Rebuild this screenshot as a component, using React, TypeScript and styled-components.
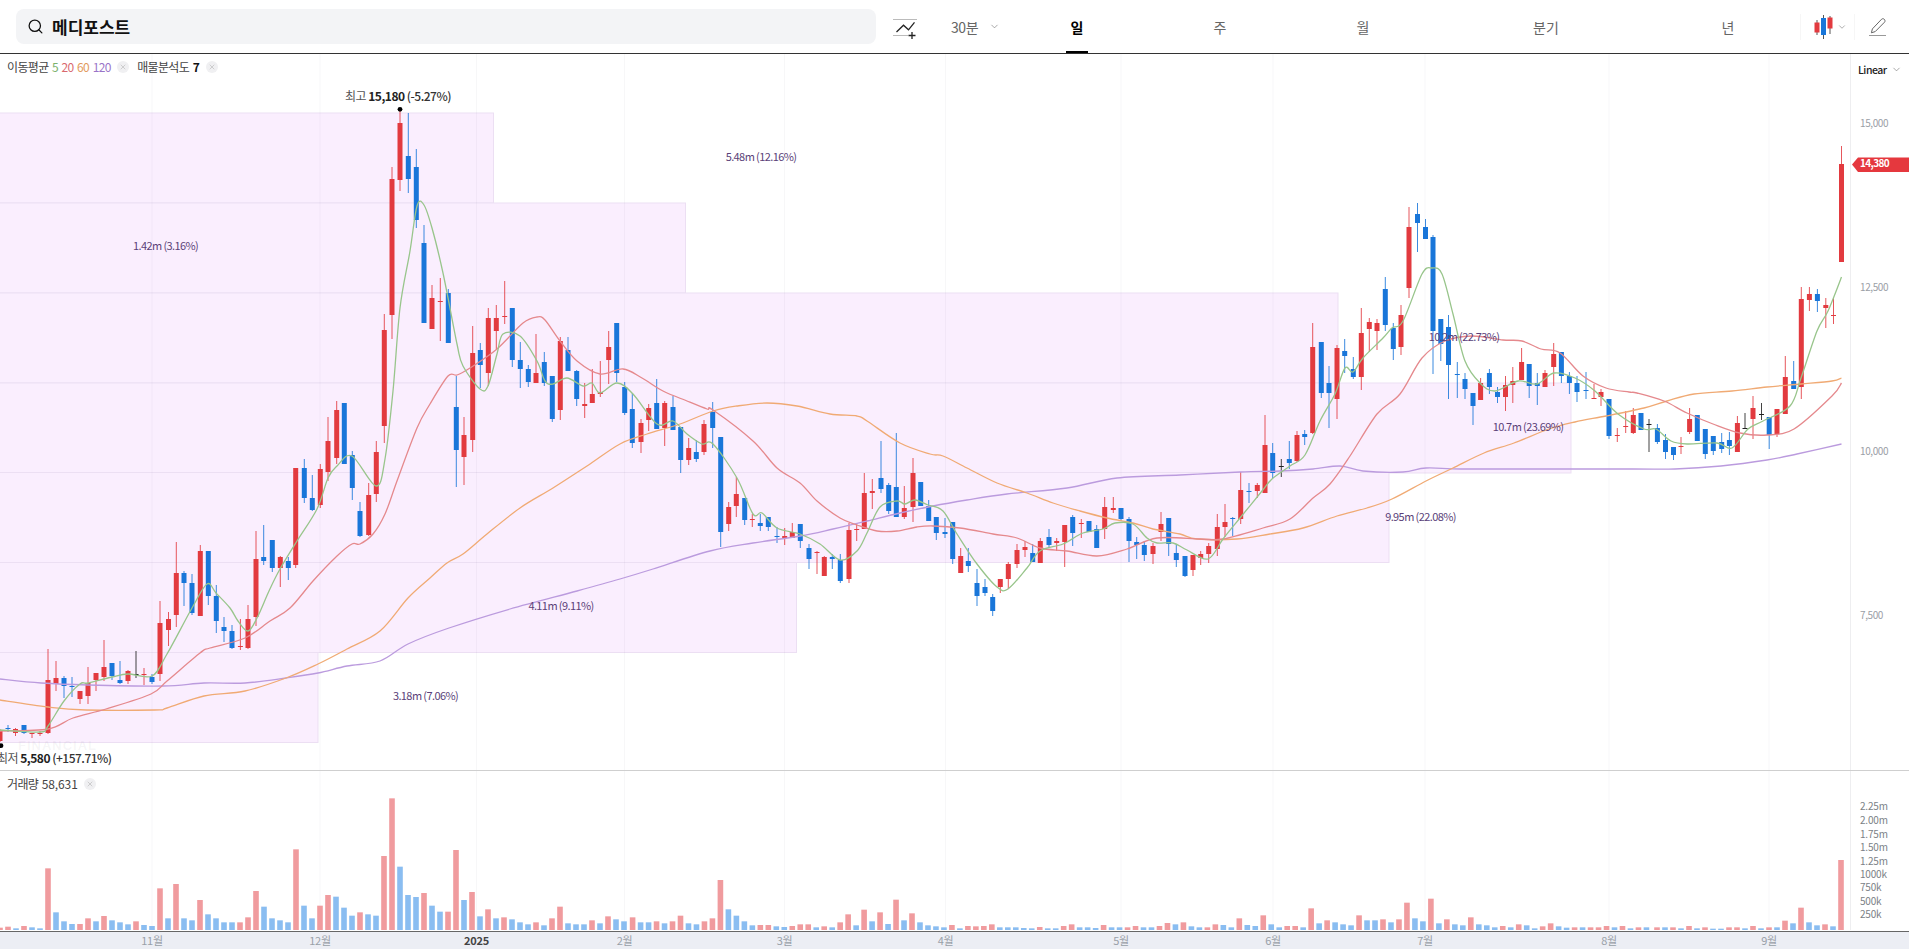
import React from 'react';
import styled, { createGlobalStyle } from 'styled-components';
import { Search, ChevronDown, X } from 'lucide-react';

const FONT = '"Noto Sans CJK KR", "Noto Sans", sans-serif';
const RED = '#e23a3f';
const BLUE = '#1976d9';

const Global = createGlobalStyle`
  html, body { margin: 0; padding: 0; background: #fff; overflow: hidden; }
  body { font-family: ${FONT}; }
`;

const CANDLES = `
0 728 730 740 741 r
8 724 727 728 731 b
15.5 727 728 732 735 r
24 724 724 732 733 b
32 732 732 733 737 r
40 730 732 733 735 r
48 648 679 732 733 r
56 660 677 683 690 r
64 675 677 685 697 b
72 676 685 686 696 b
80 690 690 698 703 r
88 666 682 695 703 r
96 672 672 679 690 r
104 639 666 676 680 r
112 662 662 675 679 b
120 660 679 682 683 b
128 669 670 680 683 r
136 650 673 674 677 k
144 667 673 674 684 r
152 673 676 681 683 b
160 600 622 673 680 r
168.5 611 618 629 645 r
176.3 541 572 614 626 r
184 570 572 582 605 b
192 573 582 612 614 b
200.3 544 550 615 615 r
208.3 550 550 595 604 b
216.3 584 595 620 632 b
224 616 626 630 641 b
232 624 630 647 648 b
240.4 618 645 646 649 r
248 604 618 647 648 r
256 530 558 616 625 r
263.7 524 556 560 564 b
272.3 539 539 567 571 b
280.3 555 556 567 586 r
288.3 556 560 567 579 b
295.7 467 467 564 567 r
304.3 458 467 497 502 b
312.3 474 497 509 510 b
320.3 463 468 504 507 r
328 416 440 471 480 r
336.7 400 409 457 463 r
344.3 402 402 463 463 b
352.3 450 454 487 499 b
360 501 510 535 536 b
368.7 482 494 534 535 r
376.3 440 451 493 501 r
384.3 313 329 425 442 r
392 166 178 314 338 r
400 110 122 179 190 r
408.3 112 155 178 192 b
416.3 148 166 219 227 b
424 224 242 322 322 b
432 284 297 328 328 r
440.3 277 300 301 340 r
448.3 288 292 342 342 b
456.3 375 406 449 486 b
464 416 434 456 484 r
472.7 325 352 439 451 r
480.3 342 349 364 387 b
488.3 307 317 372 385 r
496.3 304 317 330 348 r
504.7 280 315 316 323 r
512.3 307 307 359 366 b
520.3 341 359 368 387 b
528.3 364 368 381 386 b
536 333 372 382 382 r
544.3 351 361 382 385 b
552.3 375 375 418 421 b
560.3 336 340 409 419 r
568 336 349 370 370 b
576.7 369 370 398 405 b
584.7 382 403 405 417 r
592.3 368 393 402 402 r
600.3 360 391 393 396 r
608.7 330 346 359 383 r
616.7 322 322 372 381 b
624.7 381 386 412 414 b
632.3 392 408 442 447 b
641 418 422 441 452 r
648.7 403 407 419 430 r
656.7 378 402 428 428 b
664.7 400 402 427 445 r
673 395 406 429 429 b
680.7 426 426 459 472 b
688.7 437 447 459 464 r
696.3 439 451 458 461 b
704 419 423 451 454 r
712.7 401 411 427 447 b
720.7 436 436 531 546 b
728.7 501 506 523 530 r
736.3 476 493 505 516 r
744.7 497 497 519 524 b
752.3 513 518 519 526 r
760.3 513 522 525 530 b
768.3 516 516 526 530 b
777 526 535 536 542 b
784.7 527 535 537 544 r
792.3 522 531 537 537 r
800.3 523 523 540 547 b
809 543 547 558 568 b
817 550 551 552 573 r
824.3 555 556 575 575 r
832.3 553 556 558 568 b
840.3 553 559 580 582 b
849 522 529 578 582 r
856.7 523 528 529 540 r
864.3 472 492 528 528 r
872.3 478 490 492 508 r
881 440 477 488 492 b
888.7 482 484 510 513 b
896.3 432 486 516 516 b
904.3 485 507 516 518 r
913 457 472 506 521 r
920.7 481 481 505 505 b
928.7 499 505 520 520 b
936.3 516 516 532 539 b
945 517 531 533 537 b
952.7 521 521 558 563 b
960.7 547 555 572 572 r
968.3 547 560 565 571 b
977 568 582 595 605 b
985 578 586 592 595 b
992.7 593 596 610 615 b
1000.3 578 578 586 592 r
1008.3 561 563 578 588 r
1017 543 549 563 567 r
1025 540 546 549 556 r
1032.7 543 552 561 561 b
1040.3 537 540 562 562 r
1049 528 536 544 546 b
1056.7 537 540 542 550 r
1064.7 524 524 541 566 r
1072.7 514 516 532 545 b
1081.3 518 522 523 537 r
1089 520 520 531 531 b
1096.7 524 528 547 547 b
1104.7 496 506 528 538 r
1113.3 496 507 509 512 r
1121 507 507 518 520 b
1129 516 518 540 561 b
1136.7 536 541 544 558 b
1144.3 540 544 554 560 b
1153 542 545 553 563 r
1161 511 523 531 540 r
1168.7 517 517 543 555 b
1176.3 543 552 559 566 b
1185 555 555 575 576 b
1193 554 554 569 575 r
1200.7 550 553 557 564 r
1208.7 542 545 553 562 r
1217.3 513 526 548 555 r
1225 503 521 526 536 r
1232.7 516 517 518 535 b
1240.7 471 489 518 523 r
1249 482 490 491 502 b
1257.3 482 484 490 497 r
1265 414 444 492 492 r
1272.7 442 452 472 477 b
1281.3 458 465 466 476 k
1289.3 440 458 462 468 b
1297 430 434 460 461 r
1304.7 429 433 436 444 b
1312.7 322 346 432 433 r
1321.3 341 341 392 397 b
1329 365 382 392 427 b
1337 344 347 398 418 r
1344.7 338 350 355 372 b
1353.3 356 368 376 378 b
1361.3 307 332 376 389 r
1369.3 317 321 328 351 r
1377 318 322 330 349 r
1385.3 276 288 324 330 b
1393.3 322 327 348 359 b
1401 304 314 346 354 r
1409 206 226 287 297 r
1417.5 202 213 222 251 b
1425.5 218 226 238 238 b
1433 234 236 330 373 b
1440.8 318 318 343 360 b
1448.5 314 326 364 398 b
1457.3 361 373 374 397 b
1465 372 378 388 398 b
1473 392 392 405 424 b
1480.6 377 382 399 399 r
1489.4 368 372 386 393 b
1497.5 386 391 396 402 b
1505.5 375 384 396 410 r
1512.8 366 380 384 402 r
1521.6 347 361 379 379 r
1529.2 363 363 385 397 b
1537.3 372 382 385 404 b
1545 369 372 386 386 r
1553.7 342 353 366 385 r
1561.4 351 351 375 382 b
1569.4 371 375 382 393 b
1577 375 382 391 401 b
1586 371 389 390 398 b
1594 383 397 398 398 r
1601 388 391 396 405 r
1609 398 398 435 438 b
1617.3 427 434 435 441 r
1625.7 410 425 426 432 r
1633.3 407 414 432 433 r
1641 412 412 429 429 b
1649 418 423 424 451 k
1657.4 423 427 441 443 b
1665.5 433 439 451 458 b
1673.5 446 446 454 459 b
1681 436 445 446 453 r
1689.6 407 418 431 433 r
1697.3 414 414 440 440 b
1705.3 428 428 453 458 b
1713.3 435 435 450 454 b
1721.7 432 441 448 452 b
1729.4 431 439 445 454 b
1737.4 415 422 451 451 r
1745 412 427 428 428 k
1753 395 407 418 438 r
1761.5 402 413 414 419 k
1769.2 416 416 434 448 b
1777 408 408 433 436 r
1785.3 355 376 413 413 r
1793.7 360 380 388 388 b
1801.3 286 298 386 398 r
1809.4 286 293 299 310 r
1817.4 288 293 300 311 b
1825.8 297 304 307 327 r
1833.5 297 314 315 323 r
1841.5 145 163 261 261 r
`
  .trim()
  .split('\n')
  .map((line) => {
    const [x, wt, bt, bb, wb, c] = line.split(' ');
    return { x: +x, wt: +wt, bt: +bt, bb: +bb, wb: +wb, c };
  });

const parseVolume = (data: string, start: number, step: number, base: number) =>
  data
    .trim()
    .split(/\s+/)
    .map((token, i) => ({
      x: start + i * step,
      h: (base - Number(token.slice(1))) / 3,
      c: token[0],
    }));

const VOLUMES = [
  ...parseVolume(
    `r503 r500 b505 r498 b502 b505 r325 b457 b484 b492 r492 r475 b484 r468 b481 b487 b493 r484 b495 b498
     r385 b475 r372 b475 b481 r420 b463 b475 b487 b487 r487 r472 r393 b440 b475 b481 b487 r268 b437 b475
     r437 r405 b410 b443 b467 r457 b463 b467 r288 r115 b320 b405 b411 r399 b437 b455 r455 r270 b420 r396
     b469 r448 b475 r472 b478 b487 b493 r487 b496 r475 r440 b490 b493 b493 r481 b490 r469 b478 b484`,
    0,
    8,
    510,
  ),
  ...parseVolume(
    `r202 b217 b217 r214 b220 r214 r197 b220 b223 r214 r205 r90 b178 b197 b214 b226 r225 r225 b229 b231
     r228 r223 r223 b232 r229 b232 r217 r193 b226 r179 b214 r187 b222 r149 b211 r190 b217 b226 b229 b232
     r225 b235 r228 r229 r228 r223 b232 b232 b232 b234 b235 r231 b235 b235 r228 r223 b232 b232 b234 r225
     b232 b232 r232 r228 b232 b232 r228 r219 b223 r217 b229 b232 r232 r223 b225 b232 r205 b225 b228 r196
     b223 b232 r228 r228 b232 r175 b220 r211 b217 b223 b226 r196 b211 b211 r208 b217 r208 r158 b205 b214
     r146 b220 r208 b223 b226 r202 b223 b226 b232 r228 b232 r223 b226 b235 r229 r220 b229 b233 r232 b232
     r232 r232 r228 b232 r228 b235 r232 b232`,
    632.6,
    7.983,
    240,
  ),
  ...parseVolume(
    `r502 b502 r502 b505 r498 b505 r502 b506 b506 r502 r502 b505 r498 b505 r502 b502 r482 b490 r443 b487 b496 r493 b499 r300`,
    1657,
    8,
    510,
  ),
];

const ROWS = [
  { y: 112, right: 493.5 },
  { y: 202, right: 685.5 },
  { y: 292, right: 1338 },
  { y: 382, right: 1571 },
  { y: 471.5, right: 1389 },
  { y: 561.5, right: 796.5 },
  { y: 651.5, right: 318 },
];

const PROFILE_LABELS = [
  { x: 761, y: 157, text: '5.48m (12.16%)' },
  { x: 165.6, y: 246.5, text: '1.42m (3.16%)' },
  { x: 1464, y: 337, text: '10.2m (22.73%)' },
  { x: 1528, y: 427, text: '10.7m (23.69%)' },
  { x: 1420.5, y: 517, text: '9.95m (22.08%)' },
  { x: 561, y: 606, text: '4.11m (9.11%)' },
  { x: 425.5, y: 696, text: '3.18m (7.06%)' },
];

const MONTHS = [
  { x: 152, label: '11월' },
  { x: 320, label: '12월' },
  { x: 476.5, label: '2025', strong: true },
  { x: 624.5, label: '2월' },
  { x: 784.5, label: '3월' },
  { x: 945.5, label: '4월' },
  { x: 1121, label: '5월' },
  { x: 1273, label: '6월' },
  { x: 1425, label: '7월' },
  { x: 1609, label: '8월' },
  { x: 1769, label: '9월' },
];

const PRICE_TICKS = [
  { y: 123, label: '15,000' },
  { y: 287, label: '12,500' },
  { y: 451, label: '10,000' },
  { y: 615, label: '7,500' },
];

const VOLUME_TICKS = [
  { y: 807.7, label: '2.25m' },
  { y: 821.2, label: '2.00m' },
  { y: 835, label: '1.75m' },
  { y: 848.7, label: '1.50m' },
  { y: 862, label: '1.25m' },
  { y: 875, label: '1000k' },
  { y: 888.6, label: '750k' },
  { y: 902, label: '500k' },
  { y: 915.7, label: '250k' },
];

const smooth = (raw: string) => {
  const p = raw.split(' ').map((pair) => pair.split(',').map(Number));
  let d = `M${p[0][0]} ${p[0][1]}`;
  for (let i = 0; i < p.length - 1; i++) {
    const a = p[Math.max(i - 1, 0)];
    const b = p[i];
    const c = p[i + 1];
    const e = p[Math.min(i + 2, p.length - 1)];
    const c1x = b[0] + (c[0] - a[0]) / 6;
    const c1y = b[1] + (c[1] - a[1]) / 6;
    const c2x = c[0] - (e[0] - b[0]) / 6;
    const c2y = c[1] - (e[1] - b[1]) / 6;
    d += `C${c1x.toFixed(1)} ${c1y.toFixed(1)} ${c2x.toFixed(1)} ${c2y.toFixed(1)} ${c[0]} ${c[1]}`;
  }
  return d;
};

const MOVING_AVERAGES = [
  {
    color: '#bb9bde',
    points:
      '0,678 41,682 88,684 163,685 204,682 245,682 286,677 318,672 347,665 380,660 408,643 449,627 510,608 577,590 620,578 653,568 710,550 753,542 800,535 833,528 867,520 900,512 933,505 967,499 1007,493 1067,487 1117,477 1180,474 1240,471 1280,470 1313,468 1340,465 1363,470 1403,471 1426,467 1461,468 1530,468 1633,468 1675,468 1721,465 1767,459 1797,453 1841.5,443',
  },
  {
    color: '#f0aa74',
    points:
      '0,699 48,706 86,709 155,709 167,707 204,695 245,690 286,677 318,663 347,648 380,630 408,597 430,577 447,562 463,553 487,533 520,507 553,487 587,465 620,443 647,433 680,423 713,410 737,405 767,402 797,405 830,413 857,415 867,420 900,442 930,453 943,455 967,467 997,482 1027,492 1053,502 1080,510 1107,517 1133,522 1153,528 1180,533 1197,538 1237,538 1270,533 1303,527 1337,515 1367,507 1392,498 1426,480 1453,467 1484,452 1514,442 1549,428 1575,421 1606,415 1644,407 1667,400 1694,393 1732,390 1767,386 1801,383 1832,380 1841.5,377',
  },
  {
    color: '#e5898d',
    points:
      '0,730 48,728 73,717 106,708 151,693 167,680 200,652 210,647 245,637 270,620 290,607 313,580 337,555 352,543 360,543 373,533 385,513 397,480 417,427 430,403 448,375 457,374 470,367 497,348 523,322 537,316 545,319 560,340 577,360 600,373 623,368 642,377 663,390 687,400 707,408 713,409 753,440 777,467 800,482 817,500 840,517 857,524 877,530 897,530 917,526 933,525 960,527 993,533 1017,537 1040,547 1067,550 1097,555 1127,548 1157,537 1200,538 1223,538 1263,527 1290,518 1313,497 1330,483 1350,455 1377,413 1400,393 1422,357 1445,340 1472,335 1503,339 1522,340 1541,348 1560,352 1583,375 1606,387 1629,391 1637,392 1664,400 1687,412 1713,423 1740,432 1767,434 1794,428 1832,395 1841.5,382',
  },
  {
    color: '#98c58b',
    points:
      '0,729 40,731 48,725 64,700 80,683 88,682 112,676 128,673 152,675 167,653 192,607 207,583 216,592 230,607 238,620 248,630 257,617 269,590 280,568 297,540 317,508 328,477 337,465 352,455 376,485 385,458 393,390 400,307 410,250 417,205 424,204 432,227 443,272 457,343 463,365 480,388 488,385 497,353 503,333 520,335 537,360 545,380 553,383 567,377 583,385 592,382 600,392 617,382 633,393 657,423 673,420 687,433 702,443 713,443 737,477 753,513 762,512 777,527 800,533 820,543 840,559 857,550 867,532 880,506 897,500 905,503 915,499 928,504 943,510 957,533 977,563 997,586 1008,588 1027,567 1040,550 1063,543 1083,532 1103,528 1115,522 1133,523 1147,537 1157,542 1173,542 1187,549 1208,558 1223,538 1240,517 1262,490 1272,478 1290,465 1305,454 1320,420 1335,393 1345,367 1353,371 1363,357 1383,337 1392,327 1403,320 1422,273 1432,267 1442,273 1453,313 1465,360 1480,382 1495,390 1518,380 1537,383 1554,372 1575,377 1595,390 1618,413 1644,428 1656,428 1671,440 1687,443 1717,442 1732,447 1748,428 1763,420 1790,405 1801,377 1817,330 1828,310 1841.5,276',
  },
].map((m) => ({ color: m.color, d: smooth(m.points) }));

const candleColor = (c: string) => (c === 'r' ? RED : c === 'b' ? BLUE : '#222');

/* page frame */
const Page = styled.div`
  width: 1909px;
  height: 949px;
  display: flex;
  flex-direction: column;
  overflow: hidden;
  background: #fff;
  font-family: ${FONT};
`;

/* header */
const Header = styled.header`
  flex: none;
  height: 53px;
  display: flex;
  align-items: center;
  padding-left: 16px;
  border-bottom: 1px solid #333;
`;
const SearchBox = styled.div`
  width: 860px;
  height: 35px;
  margin-right: 17px;
  padding-left: 11px;
  display: flex;
  align-items: center;
  gap: 8px;
  box-sizing: border-box;
  background: #f3f4f6;
  border-radius: 8px;
  color: #111;
`;
const SearchTitle = styled.span`
  font-size: 17px;
  font-weight: 700;
  color: #111;
`;
const DrawToolIcon = styled.svg`
  flex: none;
  width: 25px;
  height: 24px;
  margin-right: 33px;
`;
const IntervalButton = styled.div`
  flex: none;
  width: 54.5px;
  display: flex;
  align-items: center;
  gap: 11px;
  font-size: 14px;
  letter-spacing: -0.4px;
  color: #666;
`;
const Tabs = styled.nav`
  flex: none;
  width: 793px;
  height: 53px;
  display: grid;
  grid-template-columns: 143px 143px 143px 223px 141px;
`;
const Tab = styled.div<{ $active?: boolean }>`
  position: relative;
  display: flex;
  align-items: center;
  justify-content: center;
  font-size: 14px;
  font-weight: ${(p) => (p.$active ? 700 : 400)};
  color: ${(p) => (p.$active ? '#000' : '#666')};
  &::after {
    content: '';
    display: ${(p) => (p.$active ? 'block' : 'none')};
    position: absolute;
    left: 50%;
    bottom: 0;
    width: 22px;
    height: 2.5px;
    margin-left: -11px;
    background: #000;
  }
`;
const ChartTypeButton = styled.div`
  flex: none;
  width: 55px;
  height: 26px;
  margin-left: 1.5px;
  display: flex;
  align-items: center;
  gap: 4px;
  padding-left: 13px;
  box-sizing: border-box;
  border-left: 1px solid #f6f6f6;
  border-right: 1px solid #f6f6f6;
`;
const PencilButton = styled.div`
  flex: none;
  width: 54px;
  padding-left: 13px;
  box-sizing: border-box;
  display: flex;
  align-items: center;
`;

/* chart panels */
const PricePanel = styled.section`
  position: relative;
  flex: none;
  height: 716px;
  border-bottom: 1.5px solid #cfcfcf;
`;
const VolumePanel = styled.section`
  position: relative;
  flex: none;
  height: 160px;
  border-bottom: 1.5px solid #666;
`;
const ChartSvg = styled.svg`
  display: block;
  width: 1909px;
  height: 100%;
`;
const Legend = styled.div`
  position: absolute;
  left: 7px;
  top: 3px;
  display: flex;
  align-items: center;
  font-size: 12px;
  line-height: 20px;
  letter-spacing: -0.65px;
  color: #444;
`;
const LegendGroup = styled.span`
  display: flex;
  align-items: center;
  gap: 3.5px;
  margin-right: 8px;
`;
const Period = styled.span<{ $color: string }>`
  color: ${(p) => p.$color};
`;
const LegendValue = styled.b`
  font-weight: 700;
  color: #111;
`;
const VolumeLegendValue = styled.span`
  letter-spacing: -0.1px;
`;
const CloseDot = styled.span`
  width: 12px;
  height: 12px;
  margin-left: 3px;
  border-radius: 50%;
  background: #f0f0f2;
  color: #aaa;
  display: inline-flex;
  align-items: center;
  justify-content: center;
`;
const ScaleButton = styled.div`
  position: absolute;
  left: 1858px;
  top: 8px;
  display: flex;
  align-items: center;
  gap: 4px;
  font-size: 10.5px;
  font-weight: 500;
  letter-spacing: -0.5px;
  color: #222;
`;
const TimeAxis = styled.div`
  position: relative;
  flex: 1;
  background: #eceef4;
`;
const TimeLabel = styled.span<{ $strong?: boolean }>`
  position: absolute;
  top: 0;
  transform: translateX(-50%);
  font-size: 11px;
  line-height: 17px;
  letter-spacing: -0.3px;
  font-weight: ${(p) => (p.$strong ? 700 : 400)};
  color: ${(p) => (p.$strong ? '#444' : '#99a0a8')};
`;

/* svg parts */
const ProfileRow = styled.rect`
  fill: #faeefe;
  stroke: #ecdff3;
  stroke-width: 1;
`;
const GridLine = styled.line`
  stroke: rgba(70, 70, 90, 0.045);
  stroke-width: 1;
`;
const AxisLine = styled.line`
  stroke: #eeeef0;
  stroke-width: 1;
`;
const Wick = styled.line<{ $color: string }>`
  stroke: ${(p) => p.$color};
  stroke-width: 1;
  stroke-opacity: 0.85;
`;
const Body = styled.rect<{ $color: string }>`
  fill: ${(p) => p.$color};
`;
const AverageLine = styled.path<{ $color: string }>`
  fill: none;
  stroke: ${(p) => p.$color};
  stroke-width: 1.3;
  stroke-linejoin: round;
`;
const ProfileLabel = styled.text`
  font-family: ${FONT};
  font-size: 11px;
  letter-spacing: -0.6px;
  fill: #5a3f78;
  text-anchor: middle;
  dominant-baseline: middle;
`;
const AxisLabel = styled.text`
  font-family: ${FONT};
  font-size: 10px;
  letter-spacing: -0.4px;
  fill: #9a9ea6;
  dominant-baseline: middle;
`;
const VolumeLabel = styled(AxisLabel)`
  fill: #7b7f86;
  letter-spacing: -0.2px;
`;
const PriceTagText = styled.text`
  font-family: ${FONT};
  font-size: 10px;
  font-weight: 700;
  letter-spacing: -0.6px;
  fill: #fff;
  dominant-baseline: middle;
`;
const Extreme = styled.text`
  font-family: ${FONT};
  font-size: 12px;
  letter-spacing: -0.5px;
  fill: #333;
  font-weight: 500;
  dominant-baseline: middle;
`;
const ExtremeName = styled.tspan`
  fill: #555;
  font-weight: 400;
`;
const ExtremeValue = styled.tspan`
  fill: #222;
  font-weight: 700;
`;
const Watermark = styled.text`
  font-family: "Liberation Sans", sans-serif;
  font-size: 13px;
  font-weight: 700;
  letter-spacing: 1px;
  fill: rgba(120, 120, 130, 0.07);
  dominant-baseline: middle;
`;
const VolumeBar = styled.rect<{ $up: boolean }>`
  fill: ${(p) => (p.$up ? '#f09b9e' : '#8abdf1')};
`;

const PriceChart = () => (
  <ChartSvg viewBox="0 53 1909 716" preserveAspectRatio="xMinYMin slice">
    {ROWS.map((r) => (
      <ProfileRow key={r.y} x={-2} y={r.y} width={r.right + 2} height={90} />
    ))}
    {MONTHS.map((m) => (
      <GridLine key={m.x} x1={m.x} x2={m.x} y1={53} y2={770} />
    ))}
    <AxisLine x1={1850.5} x2={1850.5} y1={53} y2={770} />
    {CANDLES.map((k) => {
      const color = candleColor(k.c);
      return (
        <g key={k.x}>
          <Wick $color={color} x1={k.x} x2={k.x} y1={k.wt} y2={k.wb} />
          <Body
            $color={color}
            x={k.x - 2.5}
            y={k.bt}
            width={5}
            height={Math.max(k.bb - k.bt, 1)}
          />
        </g>
      );
    })}
    {MOVING_AVERAGES.map((m) => (
      <AverageLine key={m.color} $color={m.color} d={m.d} />
    ))}
    {PROFILE_LABELS.map((l) => (
      <ProfileLabel key={l.text} x={l.x} y={l.y}>
        {l.text}
      </ProfileLabel>
    ))}
    <circle cx={400} cy={108.3} r={2.4} fill="#000" />
    <Extreme x={345} y={96.5}>
      <ExtremeName>최고 </ExtremeName>
      <ExtremeValue>15,180</ExtremeValue> (-5.27%)
    </Extreme>
    <circle cx={1} cy={744.7} r={2.4} fill="#000" />
    <Watermark x={18} y={746}>
      FINANCIAL
    </Watermark>
    <Extreme x={-3} y={758.5}>
      <ExtremeName>최저 </ExtremeName>
      <ExtremeValue>5,580</ExtremeValue> (+157.71%)
    </Extreme>
    {PRICE_TICKS.map((t) => (
      <AxisLabel key={t.label} x={1860} y={t.y}>
        {t.label}
      </AxisLabel>
    ))}
    <polygon points="1852,163.5 1858,156.5 1909,156.5 1909,171 1858,171" fill="#e5383e" />
    <PriceTagText x={1860} y={163.5}>
      14,380
    </PriceTagText>
  </ChartSvg>
);

const VolumeChart = () => (
  <ChartSvg viewBox="0 771 1909 160" preserveAspectRatio="xMinYMin slice">
    {MONTHS.map((m) => (
      <GridLine key={m.x} x1={m.x} x2={m.x} y1={771} y2={930} />
    ))}
    <AxisLine x1={1850.5} x2={1850.5} y1={771} y2={930} />
    {VOLUMES.map((v, i) => (
      <VolumeBar key={i} $up={v.c === 'r'} x={v.x - 2.8} y={930 - v.h} width={5.6} height={v.h} />
    ))}
    {VOLUME_TICKS.map((t) => (
      <VolumeLabel key={t.label} x={1860} y={t.y}>
        {t.label}
      </VolumeLabel>
    ))}
  </ChartSvg>
);

const Close = () => (
  <CloseDot>
    <X size={8} strokeWidth={1.5} />
  </CloseDot>
);

export default function App() {
  return (
    <Page>
      <Global />
      <Header>
        <SearchBox>
          <Search size={17} strokeWidth={1.8} />
          <SearchTitle>메디포스트</SearchTitle>
        </SearchBox>
        <DrawToolIcon viewBox="0 0 25 24">
          <path d="M0 4.5h24" stroke="#bbb" fill="none" />
          <path d="M0 20.5h15" stroke="#bbb" fill="none" />
          <path d="M3.5 17l7-6.8 5 4.6 6-7.5" stroke="#222" strokeWidth="1.3" fill="none" />
          <path d="M19 17v7M15.5 20.5h7" stroke="#222" strokeWidth="1.3" fill="none" />
        </DrawToolIcon>
        <IntervalButton>
          30분
          <ChevronDown size={11} strokeWidth={1.4} color="#777" />
        </IntervalButton>
        <Tabs>
          <Tab $active>일</Tab>
          <Tab>주</Tab>
          <Tab>월</Tab>
          <Tab>분기</Tab>
          <Tab>년</Tab>
        </Tabs>
        <ChartTypeButton>
          <svg width="19" height="24" viewBox="0 0 19 24">
            <path d="M3 5v15M9.5 0v24M16 1v18" stroke="#555" strokeWidth="1" fill="none" />
            <rect x="0.5" y="7.5" width="5" height="10" fill={RED} />
            <rect x="7" y="3" width="5" height="17" fill={BLUE} />
            <rect x="13.5" y="2.5" width="5" height="11" fill={RED} />
          </svg>
          <ChevronDown size={10} strokeWidth={1.4} color="#777" />
        </ChartTypeButton>
        <PencilButton>
          <svg width="20" height="20" viewBox="0 0 20 20">
            <path
              d="M13.6 2.2c.9-.9 2.4-.4 2.9.3.6.8.7 2 0 2.7L7.2 14.6l-3.8 1.2 1-3.9z"
              stroke="#666"
              strokeWidth="1"
              fill="none"
            />
            <path d="M1 18.5h17" stroke="#999" strokeWidth="1" />
          </svg>
        </PencilButton>
      </Header>
      <PricePanel>
        <PriceChart />
        <Legend>
          <LegendGroup>
            이동평균 <Period $color="#7cb26c">5</Period>
            <Period $color="#d9696e">20</Period>
            <Period $color="#e29a5c">60</Period>
            <Period $color="#9a74c8">120</Period>
            <Close />
          </LegendGroup>
          <LegendGroup>
            매물분석도 <LegendValue>7</LegendValue>
            <Close />
          </LegendGroup>
        </Legend>
        <ScaleButton>
          Linear
          <ChevronDown size={11} strokeWidth={1.4} color="#777" />
        </ScaleButton>
      </PricePanel>
      <VolumePanel>
        <VolumeChart />
        <Legend>
          <LegendGroup>
            거래량 <VolumeLegendValue>58,631</VolumeLegendValue>
            <Close />
          </LegendGroup>
        </Legend>
      </VolumePanel>
      <TimeAxis>
        {MONTHS.map((m) => (
          <TimeLabel key={m.x} $strong={m.strong} style={{ left: m.x }}>
            {m.label}
          </TimeLabel>
        ))}
      </TimeAxis>
    </Page>
  );
}
